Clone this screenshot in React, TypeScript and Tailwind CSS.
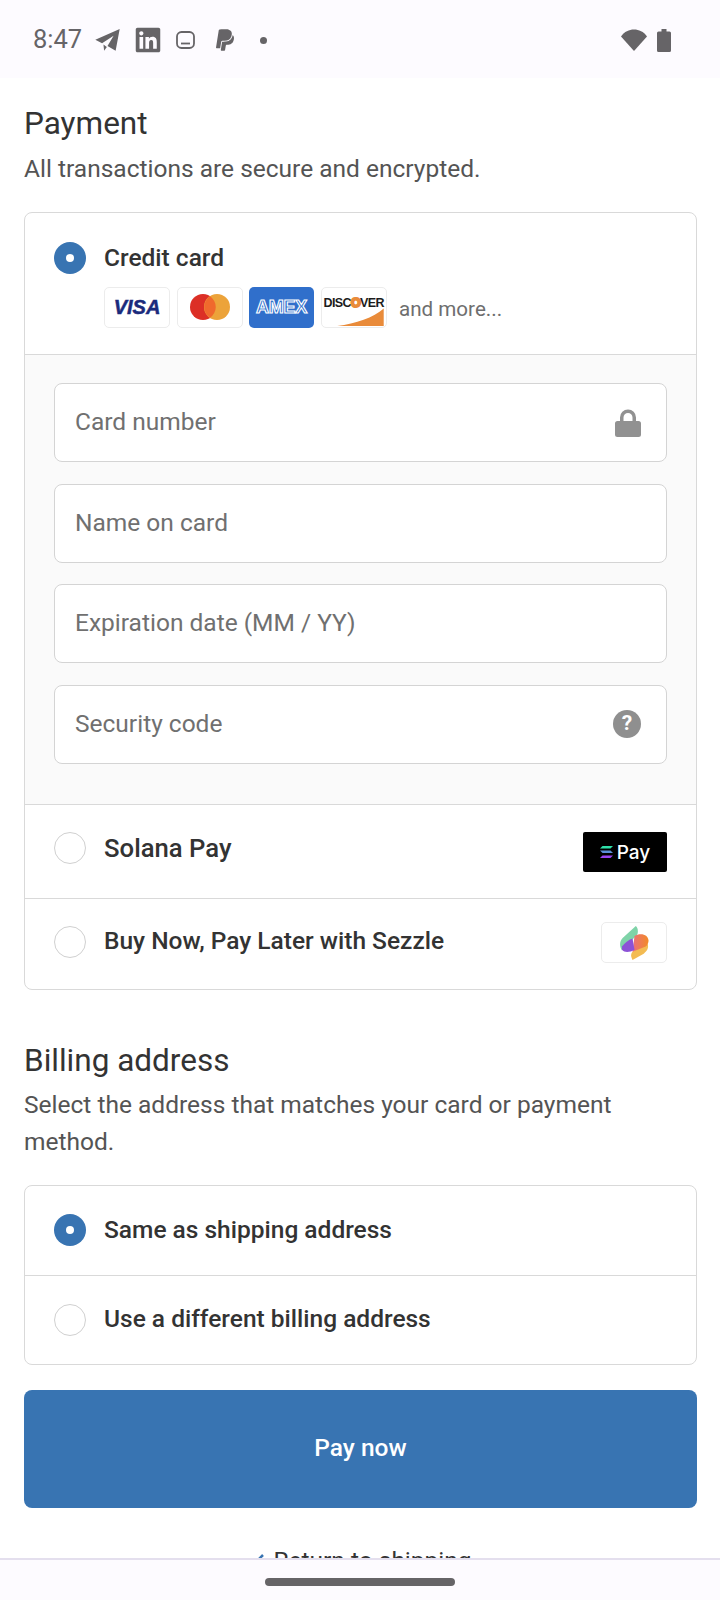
import { FaLinkedin, FaPaypal } from 'react-icons/fa'

function Radio({ checked }: { checked?: boolean }): React.JSX.Element {
  if (checked) {
    return (
      <span className="flex h-8 w-8 shrink-0 items-center justify-center rounded-full bg-[#3874b2]">
        <span className="h-[8px] w-[8px] rounded-full bg-white" />
      </span>
    )
  }
  return <span className="h-8 w-8 shrink-0 rounded-full border border-[#d0d0d0] bg-white" />
}

function Field({ label, icon }: { label: string; icon?: React.ReactNode }): React.JSX.Element {
  return (
    <div className="flex h-[79px] items-center justify-between rounded-[8px] border border-[#d4d4d4] bg-white pl-[20px] pr-[25px]">
      <span className="text-[24.500px] text-[#707070]">{label}</span>
      {icon}
    </div>
  )
}

function CardBadge({ children }: { children: React.ReactNode }): React.JSX.Element {
  return (
    <div className="flex h-[41px] w-[66px] items-center justify-center overflow-hidden rounded-[5px] border border-[#ececec] bg-white">
      {children}
    </div>
  )
}

function StatusBar(): React.JSX.Element {
  return (
    <div className="flex h-[78px] shrink-0 items-center bg-[#fdfbff] pl-[33px] pt-[2px] text-[#666467]">
      <span className="w-[62px] text-[25.500px] leading-none">8:47</span>
      <svg viewBox="0 0 72 65" className="h-[22px] w-[25px]" fill="currentColor">
        <path d="M0 32 72 0 60 64 36 50 54 20 20 42z" />
        <path d="M24 46 34 53 26 64z" />
      </svg>
      <FaLinkedin className="ml-[14px] h-[28px] w-[28px]" />
      <svg viewBox="0 0 19 18" className="ml-[14px] h-[18px] w-[19px]" fill="none" stroke="currentColor">
        <rect x="1" y="1" width="17" height="16" rx="4.500" strokeWidth="1.800" />
        <path d="M5 12.500h9" strokeWidth="1.800" />
      </svg>
      <FaPaypal className="ml-[20px] h-[24px] w-[20px]" />
      <span className="ml-[25px] h-[7px] w-[7px] rounded-full bg-[#666467]" />
      <div className="ml-auto flex items-center gap-[10px] pr-[49px]">
        <svg viewBox="0 0 26 22" className="h-[22px] w-[26px]" fill="currentColor">
          <path d="M13 22 0 7.500C3.500 2.500 8 .5 13 .5s9.500 2 13 7z" />
        </svg>
        <svg viewBox="0 0 14 23" className="h-[23px] w-[14px]" fill="currentColor">
          <path d="M4.500 0h5v2.500H12.500A1.500 1.500 0 0 1 14 4v17.500a1.500 1.500 0 0 1-1.500 1.500h-11A1.500 1.500 0 0 1 0 21.500V4a1.500 1.500 0 0 1 1.500-1.500h3z" />
        </svg>
      </div>
    </div>
  )
}

export default function App(): React.JSX.Element {
  return (
    <div className="flex h-[1600px] w-[720px] flex-col overflow-hidden bg-white font-['Roboto',sans-serif] text-[#333333]">
      <StatusBar />

      <main className="min-h-0 flex-1 overflow-hidden pl-[24px] pr-[23px] pt-[26px]">
        <h2 className="text-[31.500px] leading-[40px] text-[#333333]">Payment</h2>
        <p className="mt-[6px] text-[24.500px] leading-[37px] text-[#545454]">All transactions are secure and encrypted.</p>

        {/* Payment methods */}
        <div className="mt-[25px] overflow-hidden rounded-[8px] border border-[#d9d9d9]">
          <div className="h-[141px] px-[29px] pt-[27px]">
            <div className="flex items-center gap-[18px]">
              <Radio checked />
              <span className="text-[24.500px] font-medium text-[#333333]">Credit card</span>
            </div>
            <div className="ml-[50px] mt-[10px] flex items-center gap-[6.500px]">
              <CardBadge>
                <span className="font-['Liberation_Sans',sans-serif] text-[20px] font-bold italic text-[#1a2a7c] [-webkit-text-stroke:0.5px_#1a2a7c]">VISA</span>
              </CardBadge>
              <CardBadge>
                <svg viewBox="0 0 40 26" className="h-[26px] w-[40px]">
                  <circle cx="13" cy="13" r="13" fill="#dc2f26" />
                  <circle cx="27" cy="13" r="13" fill="#eca33a" />
                  <path d="M20 2.200a13 13 0 0 1 0 21.600a13 13 0 0 1 0-21.600z" fill="#f0692d" />
                </svg>
              </CardBadge>
              <div className="flex h-[41px] w-[65px] items-center justify-center rounded-[5px] bg-[#306fcb]">
                <span className="font-['Liberation_Sans',sans-serif] text-[18px] font-bold tracking-[-0.3px] text-[#306fcb] [-webkit-text-stroke:1.100px_white]">AMEX</span>
              </div>
              <div className="relative h-[41px] w-[66px] overflow-hidden rounded-[5px] border border-[#ececec] bg-white">
                <svg viewBox="0 0 66 42" className="absolute inset-0 h-full w-full">
                  <path d="M15 41C35 38 54 32 65 22V41z" fill="#e98b3a" />
                </svg>
                <span className="absolute left-[2px] top-[6px] font-['Liberation_Sans',sans-serif] text-[12.500px] font-bold tracking-[-0.6px] text-[#1c1c1c]">
                  DISC<span className="text-[#e98b3a] [-webkit-text-stroke:2px_#e98b3a]">O</span>VER
                </span>
              </div>
              <span className="ml-[6px] mt-[5px] text-[20.600px] text-[#6e6e6e]">and more...</span>
            </div>
          </div>

          <div className="flex flex-col gap-[21.500px] border-y border-[#d9d9d9] bg-[#fafafa] px-[29px] pb-[40px] pt-[28px]">
            <Field
              label="Card number"
              icon={
                <svg viewBox="0 0 26 28" className="h-[28px] w-[26px]" fill="#919191">
                  <path d="M5 12V8.500a8 8 0 0 1 16 0V12h2.500A2.500 2.500 0 0 1 26 14.500v11a2.500 2.500 0 0 1-2.500 2.500h-21A2.500 2.500 0 0 1 0 25.500v-11A2.500 2.500 0 0 1 2.500 12zm3.500 0h9V8.500a4.500 4.500 0 0 0-9 0z" />
                </svg>
              }
            />
            <Field label="Name on card" />
            <Field label="Expiration date (MM / YY)" />
            <Field
              label="Security code"
              icon={
                <span className="flex h-[28px] w-[28px] items-center justify-center rounded-full bg-[#8f8f8f] text-[21px] font-bold text-white">?</span>
              }
            />
          </div>

          <div className="flex h-[94px] items-center border-b border-[#d9d9d9] px-[29px]">
            <div className="mb-[6px] flex items-center">
              <Radio />
              <span className="ml-[18px] text-[25.700px] font-medium text-[#333333]">Solana Pay</span>
            </div>
            <div className="ml-auto mt-[2px] flex h-[40px] w-[84px] items-center justify-center gap-[4px] rounded-[2px] bg-black">
              <svg viewBox="0 0 13 12" className="h-[12px] w-[13px]">
                <path d="M2.500 0H13L10.500 2.500H0z" fill="#2fe0a8" />
                <path d="M0 4.500H10.500L13 7H2.500z" fill="#5b8fd8" />
                <path d="M2.500 9.500H13L10.500 12H0z" fill="#9a45f0" />
              </svg>
              <span className="font-['Inter',sans-serif] text-[19px] font-medium leading-none text-white">Pay</span>
            </div>
          </div>

          <div className="flex h-[90px] items-center px-[29px]">
            <div className="mb-[4px] flex items-center">
              <Radio />
              <span className="ml-[18px] text-[24.500px] font-medium text-[#333333]">Buy Now, Pay Later with Sezzle</span>
            </div>
            <div className="mb-[2px] ml-auto flex h-[41px] w-[66px] items-center justify-center rounded-[5px] border border-[#ececec] bg-white">
              <svg viewBox="0 0 88 103" className="h-[34px] w-[29px]">
                <defs>
                  <linearGradient id="sezzleBand" x1="0" y1="0" x2="1" y2="0">
                    <stop offset="0" stopColor="#ea6f7c" />
                    <stop offset="1" stopColor="#f38a26" />
                  </linearGradient>
                </defs>
                <path d="M48 0C56 6 56 22 50 30L20 55C14 60 8 66 6 74C-2 62-2 46 8 36z" fill="#7fd3a8" />
                <path d="M84 54C88 66 82 76 72 84L38 103C32 92 32 84 40 76z" fill="#f3bb52" />
                <path d="M44 30C54 24 70 22 80 30C90 40 88 54 78 62L38 78z" fill="url(#sezzleBand)" />
                <path d="M6 62C14 52 26 42 38 38L44 72C30 80 14 82 6 72z" fill="#8c52d6" />
              </svg>
            </div>
          </div>
        </div>

        <h2 className="mt-[51px] text-[31.500px] leading-[40px] text-[#333333]">Billing address</h2>
        <p className="mt-[5px] text-[24.500px] leading-[37px] text-[#545454]">Select the address that matches your card or payment method.</p>

        <div className="mt-[25px] overflow-hidden rounded-[8px] border border-[#d9d9d9]">
          <div className="flex h-[90px] items-center gap-[18px] border-b border-[#d9d9d9] px-[29px]">
            <Radio checked />
            <span className="text-[24.500px] font-medium text-[#333333]">Same as shipping address</span>
          </div>
          <div className="flex h-[88px] items-center gap-[18px] px-[29px]">
            <Radio />
            <span className="text-[24.500px] font-medium text-[#333333]">Use a different billing address</span>
          </div>
        </div>

        <button className="mt-[25px] flex h-[118px] w-full items-center justify-center rounded-[8px] bg-[#3874b2] text-[24.500px] font-medium text-white">
          Pay now
        </button>

        <div className="ml-[6px] mt-[35px] flex items-center justify-center gap-[8px] text-[24.500px] text-[#333333]">
          <svg viewBox="0 0 10 16" className="h-[16px] w-[10px]" fill="none" stroke="#3874b2" strokeWidth="2.500">
            <path d="M8 2 2 8l6 6" />
          </svg>
          <span>Return to shipping</span>
        </div>
      </main>

      <div className="flex h-[42px] shrink-0 items-center justify-center border-t-2 border-[#e4dfee] bg-[#fdfbff]">
        <div className="mt-[4px] h-[8px] w-[190px] rounded-full bg-[#666467]" />
      </div>
    </div>
  )
}
